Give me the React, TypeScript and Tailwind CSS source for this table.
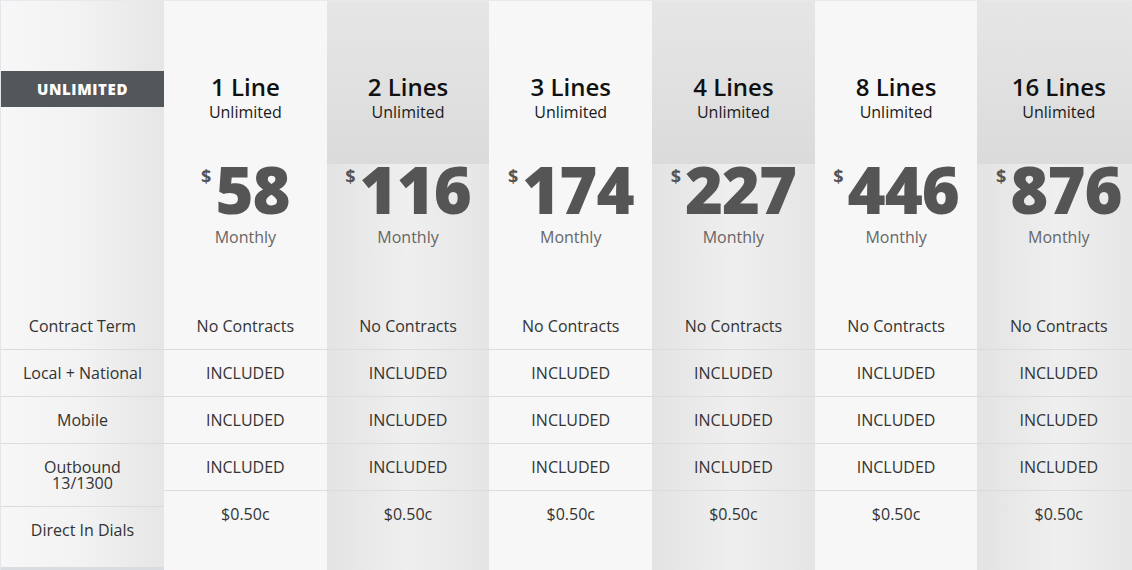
const plans = [
  { lines: '1 Line', price: '58' },
  { lines: '2 Lines', price: '116' },
  { lines: '3 Lines', price: '174' },
  { lines: '4 Lines', price: '227' },
  { lines: '8 Lines', price: '446' },
  { lines: '16 Lines', price: '876' },
];

const features = ['Contract Term', 'Local + National', 'Mobile', 'Outbound 13/1300', 'Direct In Dials'];

function PlanColumn({ lines, price, shaded }: { lines: string; price: string; shaded: boolean }) {
  const cells = ['No Contracts', 'INCLUDED', 'INCLUDED', 'INCLUDED'];
  return (
    <div
      className={`w-[162.7px] shrink-0 flex flex-col ${
        shaded ? 'bg-linear-to-r from-[#e3e3e3] via-[#efefef] to-[#e5e5e5]' : 'bg-[#f7f7f7]'
      }`}
    >
      <div
        className={`h-[163px] pt-[72px] text-center ${
          shaded ? 'bg-linear-to-b from-[#e6e6e6] to-[#dbdbdb]' : ''
        }`}
      >
        <div className="text-[24px] leading-[28px] font-semibold text-[#111]">{lines}</div>
        <div className="text-[16px] leading-[22px] text-[#1a1a1a]">Unlimited</div>
      </div>
      <div className="h-[139px] pt-[1px] text-center">
        <div className="flex justify-center items-start">
          <span className="text-[18px] leading-[18px] font-bold text-[#555] mt-[2px] mr-[4px]">$</span>
          <span className="text-[65px] leading-[48px] font-extrabold text-[#555] tracking-[-1px]">{price}</span>
        </div>
        <div className="mt-[12px] text-[16px] leading-[24px] text-[#666]">Monthly</div>
      </div>
      {cells.map((c, i) => (
        <div key={i} className="py-[15px] text-[16px] leading-[16px] text-center text-[#333] border-b border-[#dcdcdc]">
          {c}
        </div>
      ))}
      <div className="pt-[15px] flex-1 text-[16px] leading-[16px] text-center text-[#333]">$0.50c</div>
    </div>
  );
}

export default function App() {
  return (
    <div
      className="w-[1132px] h-[570px] overflow-hidden bg-white"
      style={{ fontFamily: '"Open Sans", "Noto Sans", sans-serif' }}
    >
      <div className="flex w-max h-[570px] border-t border-[#e6e9ee]">
        <div className="w-[164px] shrink-0 flex flex-col border-l border-[#e3e6ea] bg-linear-to-r from-[#f7f7f7] via-[#f2f2f2] to-[#e6e6e6]">
          <div className="h-[302px] pt-[70px]">
            <div className="h-[36px] flex items-center justify-center bg-[#53575c] text-white text-[15px] font-extrabold tracking-[0.6px]">
              UNLIMITED
            </div>
          </div>
          {features.map((f, i) => (
            <div
              key={f}
              className={`py-[15px] text-[16px] leading-[16px] text-center text-[#333] ${
                i < features.length - 1 ? 'border-b border-[#dcdcdc]' : 'h-[63px] border-b-[3px] border-[#d9dde2]'
              }`}
            >
              {f === 'Outbound 13/1300' ? (
                <>
                  Outbound
                  <br />
                  13/1300
                </>
              ) : (
                f
              )}
            </div>
          ))}
        </div>
        {plans.map((p, i) => (
          <PlanColumn key={p.lines} lines={p.lines} price={p.price} shaded={i % 2 === 1} />
        ))}
      </div>
    </div>
  );
}
